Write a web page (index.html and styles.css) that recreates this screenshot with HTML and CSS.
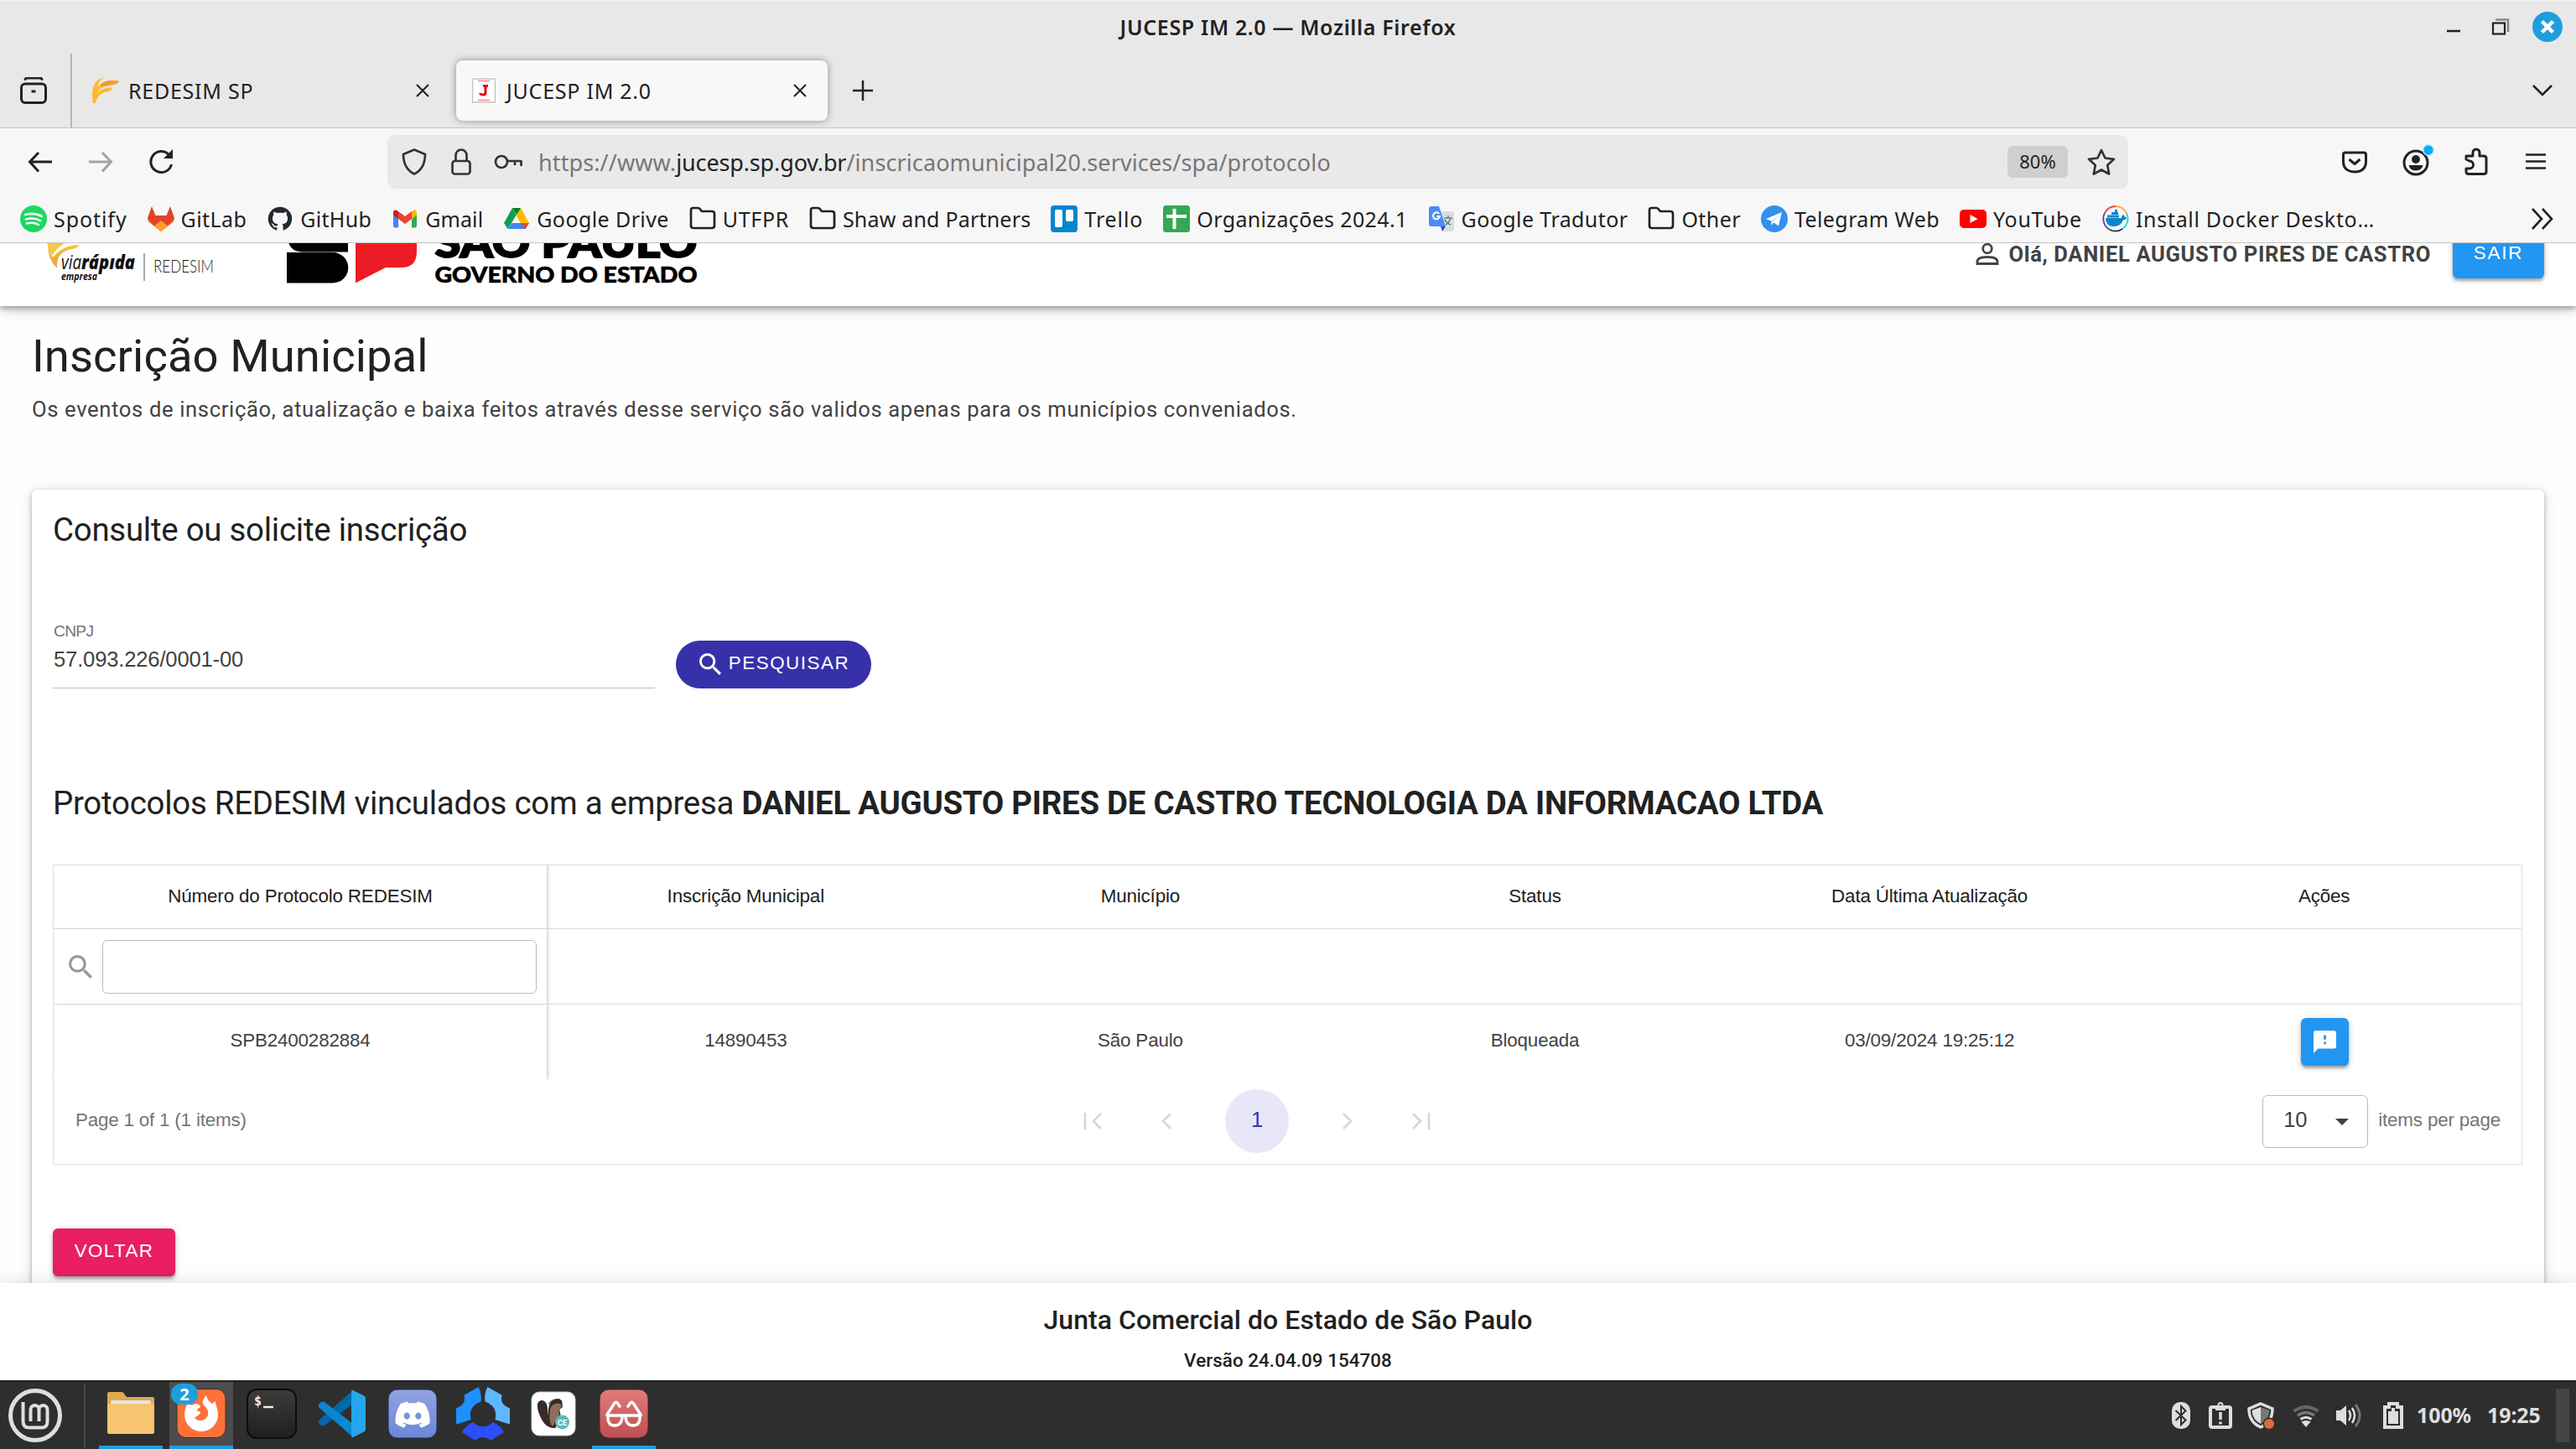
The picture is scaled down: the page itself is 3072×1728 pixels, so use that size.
FILE: index.html
```html
<!DOCTYPE html>
<html lang="pt-BR">
<head>
<meta charset="utf-8">
<title>JUCESP IM 2.0</title>
<link rel="stylesheet" href="styles.css">
</head>
<body>
<header class="titlebar">
  <span class="window-title">JUCESP IM 2.0 — Mozilla Firefox</span>
  <svg class="window-buttons" width="130" height="64" viewBox="2910 0 130 64" fill="none">
    <path d="M2918 37h16" stroke="#222" stroke-width="2.600"/>
    <path d="M2976 23.500h15V38" stroke="#888" stroke-width="2.600"/>
    <rect x="2973" y="27.500" width="14" height="13" stroke="#222" stroke-width="2.200"/>
  </svg>
  <svg class="window-close" width="36" height="36" viewBox="0 0 36 36"><circle cx="18" cy="18" r="18" fill="#1f9ede"/><path d="M11.500 11.500l13 13m0-13l-13 13" stroke="#fff" stroke-width="4.500"/></svg>
</header>

<div class="tabstrip">
  <div class="firefox-view">
    <svg width="32" height="32" viewBox="0 0 32 32" fill="none" stroke="#222" stroke-width="3" stroke-linecap="round"><path d="M6 2.500q1-1.500 2.500-1.500h15q1.500 0 2.500 1.500"/><rect x="1.500" y="8" width="29" height="22.500" rx="4.500"/><path d="M13.500 17h5" stroke-linecap="butt"/></svg>
  </div>
  <div class="tab">
    <svg width="32" height="32" viewBox="0 0 32 32"><path d="M1 31C-2 14 2 2 15 0 9 3 7 7 7 12 12 4 20 3 32 5c-2 4-6 4-12 5C12 11 8 14 6 19c6-6 12-7 18-6-2 4-5 4-9 5-6 2-9 5-11 13z" fill="#fdb92e"/><path d="M9 10C14 4 22 3 32 5c-3 4-8 3-14 5-4 1-7 2-9 0z" fill="#f49a35"/></svg>
    <span class="tab-label">REDESIM SP</span>
    <svg class="tab-close" width="16" height="16" viewBox="0 0 16 16"><path d="M1 1l14 14M15 1L1 15" stroke="#222" stroke-width="2"/></svg>
  </div>
  <div class="tab tab-active">
    <svg width="32" height="32" viewBox="0 0 32 32"><path fill="#fff" d="M0 0h32v32H0z"/><rect x="2.500" y="2" width="27" height="28" fill="#fff" stroke="#c5c5b8" stroke-width="1.500"/><path d="M9 4.500h14M9 27.500h14" stroke="#f88" stroke-width="1.600"/><path d="M15 10.500h6m-3 0v8q0 2.500-3 2.500t-3.500-2" fill="none" stroke="#e30613" stroke-width="3"/></svg>
    <span class="tab-label">JUCESP IM 2.0</span>
    <svg class="tab-close" width="16" height="16" viewBox="0 0 16 16"><path d="M1 1l14 14M15 1L1 15" stroke="#222" stroke-width="2"/></svg>
  </div>
  <svg class="new-tab" width="24" height="24" viewBox="0 0 24 24"><path d="M12 0v24M0 12h24" stroke="#222" stroke-width="2.500"/></svg>
  <svg class="all-tabs" width="26" height="16" viewBox="0 0 26 16" fill="none"><path d="M2 2l11 11L24 2" stroke="#222" stroke-width="2.600"/></svg>
</div>

<div class="toolbar">
  <svg width="232" height="80" viewBox="0 153 232 80" fill="none" stroke="#222" stroke-width="3">
    <path d="M62 193H36M46 182L35.500 193 46 204.500"/>
    <path d="M106 193h26M122 182l10.500 11-10.500 11.500" stroke="#a3a3a3"/>
    <path d="M204.500 196a12.500 12.500 0 1 1-3.500-12"/><path d="M206 178v11h-11z" fill="#222" stroke="none"/>
  </svg>
  <div class="urlbar">
    <svg width="150" height="64" viewBox="489 161 150 64" fill="none" stroke="#333" stroke-width="2.700" stroke-linejoin="round">
      <path d="M494 178.500L507 184q0 17-13 23.500Q481 201 481 184z"/>
      <rect x="539.500" y="192" width="21" height="15.500" rx="3"/><path d="M543.500 192v-7a6.500 6.500 0 0 1 13 0v7"/>
      <circle cx="598" cy="193" r="7"/><path d="M605 192h16.500v6M614 192v5"/>
    </svg>
    <span class="url">https://www.<b>jucesp.sp.gov.br</b>/inscricaomunicipal20.services/spa/protocolo</span>
    <span class="zoom">80%</span>
    <svg width="34" height="32" viewBox="0 0 34 32"><path d="M17 2l4.500 9.500 10.500 1.300-7.800 7.200 2 10.500-9.200-5-9.200 5 2-10.500L2 12.800l10.500-1.300z" fill="none" stroke="#333" stroke-width="2.700" stroke-linejoin="round"/></svg>
  </div>
  <svg class="toolbar-actions" width="260" height="80" viewBox="2780 153 260 80" fill="none" stroke="#222" stroke-width="3" stroke-linejoin="round">
    <path d="M2797 182h22q2.500 0 2.500 2.500v8q0 12-13.500 12.500-13.500-.5-13.500-12.500v-8q0-2.500 2.500-2.500z"/><path d="M2801.500 190l6.500 5.500 6.500-5.500"/>
    <circle cx="2881" cy="194" r="14"/><g fill="#222" stroke="none"><circle cx="2881" cy="190" r="5"/><path d="M2872.500 197h17q-1.500 6.500-8.500 6.500t-8.500-6.500z"/></g>
    <circle cx="2896" cy="179" r="7" fill="#b4e5fa" stroke="none"/><circle cx="2896" cy="179" r="5.500" fill="#00aef5" stroke="none"/>
    <path d="M2941 190v-4h8v-4a4 4 0 0 1 8 0v4h5q3 0 3 3v16q0 2.500-3 2.500h-18q-3 0-3-2.500v-4h4a4.500 4.500 0 0 0 0-9z"/>
    <path d="M3012 184.500h24M3012 192.500h24M3012 200.500h24" stroke-width="2.600"/>
  </svg>
</div>

<nav class="bookmarks">
  <a><svg viewBox="0 0 32 32"><circle cx="16" cy="16" r="16" fill="#1ed760"/><path d="M6 11q11-3 20 2M7 16.500q9.500-2.500 17 1.700M8 21.500q8-2 14 1.500" fill="none" stroke="#f7f7f7" stroke-width="2.600" stroke-linecap="round"/></svg>Spotify</a>
  <a><svg viewBox="0 0 32 32"><path d="M16 31L1 19 0 15 5 1l4.500 11h13L27 1l5 14-1 4z" fill="#e24329"/><path d="M16 31L1 19 0 15l8 9.500z" fill="#fc6d26"/><path d="M16 31l15-12 1-4-8 9.500z" fill="#fc6d26"/><path d="M16 31l-8-6.500L16 18l8 6.500z" fill="#fca326"/></svg>GitLab</a>
  <a><svg viewBox="-1 -1 18 18"><path fill="#24292f" d="M8 0C3.580 0 0 3.580 0 8c0 3.540 2.290 6.530 5.470 7.590.4.070.55-.17.55-.38 0-.19-.01-.82-.01-1.490-2.010.37-2.530-.49-2.690-.94-.09-.23-.48-.94-.82-1.130-.28-.15-.68-.52-.01-.53.63-.01 1.080.58 1.230.82.72 1.210 1.870.87 2.330.66.07-.52.28-.87.51-1.070-1.780-.2-3.640-.89-3.640-3.950 0-.87.31-1.590.82-2.150-.08-.2-.36-1.020.08-2.120 0 0 .67-.21 2.200.82.64-.18 1.320-.27 2-.27s1.360.09 2 .27c1.530-1.040 2.200-.82 2.200-.82.44 1.100.16 1.920.08 2.120.51.56.82 1.270.82 2.150 0 3.070-1.870 3.750-3.650 3.950.29.25.54.73.54 1.480 0 1.070-.01 1.930-.01 2.200 0 .21.15.46.55.38A8.010 8.010 0 0 0 16 8c0-4.420-3.580-8-8-8z"/></svg>GitHub</a>
  <a><svg viewBox="0 0 32 32"><path d="M2 9v15q0 2.500 2.500 2.500H8V13z" fill="#4285f4"/><path d="M24 13v13.500h3.500q2.500 0 2.500-2.500V9z" fill="#34a853"/><path d="M24 7v9l6-4.500V8.500C30 5 27 4.500 24 7z" fill="#fbbc04"/><path d="M8 16V7l8 6 8-6v9l-8 6z" fill="#ea4335"/><path d="M2 8.500v3L8 16V7C5 4.500 2 5 2 8.500z" fill="#c5221f"/></svg>Gmail</a>
  <a><svg viewBox="0 0 32 32"><path d="M11 3L1 21l4.500 7L16 11z" fill="#0f9d58"/><path d="M11 3h10l10 18H20.500z" fill="#ffba00"/><path d="M10 21h21l-4.500 7H5.500z" fill="#4285f4"/><path d="M11 3h10l-5 8z" fill="#00832d"/><path d="M22 21h9l-4.500 7z" fill="#ea4335"/></svg>Google Drive</a>
  <a><svg viewBox="0 0 32 32"><path d="M2 5.500Q2 3 4.500 3H10q2 0 3 1.500L15 7h12q3 0 3 3v14q0 3-3 3H5q-3 0-3-3z" fill="none" stroke="#222" stroke-width="2.700"/></svg>UTFPR</a>
  <a><svg viewBox="0 0 32 32"><path d="M2 5.500Q2 3 4.500 3H10q2 0 3 1.500L15 7h12q3 0 3 3v14q0 3-3 3H5q-3 0-3-3z" fill="none" stroke="#222" stroke-width="2.700"/></svg>Shaw and Partners</a>
  <a><svg viewBox="0 0 32 32"><rect width="32" height="32" rx="4" fill="#0385d1"/><rect x="5" y="5" width="9" height="21" rx="2" fill="#fff"/><rect x="18" y="5" width="9" height="14" rx="2" fill="#fff"/></svg>Trello</a>
  <a><svg viewBox="0 0 32 32"><rect width="32" height="32" rx="3.500" fill="#34a853"/><path d="M13.500 4v24M4 13h24" stroke="#fff" stroke-width="4"/></svg>Organizações 2024.1</a>
  <a><svg viewBox="0 0 32 32"><path d="M14 7h14q3 0 3 2.500V28q0 3-3 3H17z" fill="#dcdcdc"/><path d="M17 31l-2-6h6z" fill="#3a4fc4"/><path d="M1 4q0-3 3-3h9l8 24H4q-3 0-3-3z" fill="#4c8bf5"/><path d="M13.300 10a4 4 0 1 0 .7 3h-4" fill="none" stroke="#fff" stroke-width="2"/><path d="M19 15h10M24 12v3m3 0q-2 6-6 8m-1-6q3 5 7 6" fill="none" stroke="#607d8b" stroke-width="1.500"/></svg>Google Tradutor</a>
  <a><svg viewBox="0 0 32 32"><path d="M2 5.500Q2 3 4.500 3H10q2 0 3 1.500L15 7h12q3 0 3 3v14q0 3-3 3H5q-3 0-3-3z" fill="none" stroke="#222" stroke-width="2.700"/></svg>Other</a>
  <a><svg viewBox="0 0 32 32"><circle cx="16" cy="16" r="16" fill="#3390ec"/><path d="M6 16l19-8-4 16.500-5.500-4-3 3-.5-5z" fill="#fff"/><path d="M12 18.500L21 12l-7 8-1.500 3.500z" fill="#bcdcf8"/></svg>Telegram Web</a>
  <a><svg viewBox="0 0 32 32"><rect y="5" width="32" height="22" rx="5" fill="#f00"/><path d="M12.500 11v10l9-5z" fill="#fff"/></svg>YouTube</a>
  <a><svg viewBox="0 0 32 32" fill="none"><path d="M16 1a15 15 0 0 1 13 8" stroke="#fbb040" stroke-width="1.800"/><path d="M29 9a15 15 0 0 1-5 19" stroke="#27d3d8" stroke-width="1.800"/><path d="M24 28a15 15 0 0 1-15 1" stroke="#12344d" stroke-width="1.800"/><path d="M9 29A15 15 0 0 1 3 9" stroke="#5b3f97" stroke-width="1.800"/><path d="M3 9a15 15 0 0 1 13-8" stroke="#ef4056" stroke-width="1.800"/><path d="M4 15h19q0-3 2-4 2 1 2 3h2q0 3-4 3.500Q22 25 14 25 4 25 4 15z" fill="#0a87c9"/><path d="M6 11.500h14v3H6zM11 8h8v3h-8zM15 5h3v3h-3z" fill="#0a87c9"/></svg>Install Docker Deskto…</a>
  <svg class="overflow" viewBox="0 0 28 26"><path d="M2 1l11 12L2 25M14 1l11 12-11 12" fill="none" stroke="#222" stroke-width="2.600"/></svg>
</nav>

<div class="page">
  <div class="app-header">
    <div class="app-header-inner">
      <svg class="logos" width="860" height="124" viewBox="0 241 860 124">
        <defs><linearGradient id="flame" x2="0" y2="1"><stop offset="0" stop-color="#f5c838"/><stop offset="1" stop-color="#e8a03c"/></linearGradient></defs>
        <path d="M55 286H84Q68 294 62 305 58 299 57 293z" fill="#f4c945"/>
        <path d="M57 289Q56 308 68 320 67 308 74 302q5-4 12-5 6-1 9-5-20 0-32 15-6-8-6-18z" fill="url(#flame)"/>
        <g font-family="Open Sans, sans-serif" font-style="italic" fill="#111">
          <text x="73" y="321" font-size="23" textLength="24" lengthAdjust="spacingAndGlyphs">via</text>
          <text x="97" y="321" font-size="23" font-weight="800" textLength="64" lengthAdjust="spacingAndGlyphs">rápıda</text>
          <text x="73" y="334" font-size="13" font-weight="700" textLength="43" lengthAdjust="spacingAndGlyphs">empresa</text>
        </g>
        <path d="M172 302v33" stroke="#555"/>
        <text x="183" y="324.500" font-family="Lato, sans-serif" font-weight="300" font-size="21.500" fill="#222" textLength="72" lengthAdjust="spacingAndGlyphs">REDESIM</text>
        <path d="M342 280h73v20.500h-55q-16 0-18-20zM342 301h55a18 18 0 0 1 0 36.500h-55z"/>
        <path d="M424 280h73v20q0 19-18 19h-19l-36 18.500z" fill="#ed1c24"/>
        <g font-family="Lato, sans-serif" font-weight="900" fill="#000">
          <text x="518.500" y="306.500" font-size="50" textLength="313" lengthAdjust="spacingAndGlyphs" stroke="#000" stroke-width="2">SÃO PAULO</text>
          <text x="518.500" y="337" font-size="26.500" textLength="313" lengthAdjust="spacingAndGlyphs" stroke="#000" stroke-width=".6">GOVERNO DO ESTADO</text>
        </g>
      </svg>
      <div class="user">
        <svg width="28" height="28" viewBox="0 0 28 28" fill="none" stroke="#444" stroke-width="2.800"><circle cx="14" cy="7.500" r="5.300"/><path d="M2 25.500v-2.500q0-5.500 12-5.500t12 5.500v2.500z"/></svg>
        <span>Olá, DANIEL AUGUSTO PIRES DE CASTRO</span>
      </div>
      <button class="btn btn-blue btn-sair">SAIR</button>
    </div>
  </div>

  <main>
    <h1>Inscrição Municipal</h1>
    <p class="subtitle">Os eventos de inscrição, atualização e baixa feitos através desse serviço são validos apenas para os municípios conveniados.</p>

    <section class="card">
      <h2>Consulte ou solicite inscrição</h2>
      <div class="search-row">
        <div class="field">
          <label>CNPJ</label>
          <span>57.093.226/0001-00</span>
        </div>
        <button class="btn btn-search"><svg width="26" height="26" viewBox="3 3 17.500 17.500"><path fill="#fff" d="M15.500 14h-.79l-.28-.27A6.470 6.470 0 0 0 16 9.500 6.500 6.500 0 1 0 9.500 16c1.610 0 3.090-.59 4.230-1.570l.27.28v.79l5 4.990L20.490 19l-4.990-5zm-6 0C7.010 14 5 11.990 5 9.500S7.010 5 9.500 5 14 7.010 14 9.500 11.990 14 9.500 14z"/></svg>PESQUISAR</button>
      </div>
      <h2 class="company">Protocolos REDESIM vinculados com a empresa <b>DANIEL AUGUSTO PIRES DE CASTRO TECNOLOGIA DA INFORMACAO LTDA</b></h2>

      <div class="grid">
        <div class="grid-row grid-head">
          <div>Número do Protocolo REDESIM</div><div>Inscrição Municipal</div><div>Município</div><div>Status</div><div>Data Última Atualização</div><div>Ações</div>
        </div>
        <div class="grid-row grid-filter">
          <div><svg width="28" height="28" viewBox="3 3 17.500 17.500"><path fill="#979797" d="M15.500 14h-.79l-.28-.27A6.470 6.470 0 0 0 16 9.500 6.500 6.500 0 1 0 9.500 16c1.610 0 3.090-.59 4.230-1.570l.27.28v.79l5 4.990L20.490 19l-4.990-5zm-6 0C7.010 14 5 11.990 5 9.500S7.010 5 9.500 5 14 7.010 14 9.500 11.990 14 9.500 14z"/></svg><span class="filter-input"></span></div><div></div><div></div><div></div><div></div><div></div>
        </div>
        <div class="grid-row grid-data">
          <div>SPB2400282884</div><div>14890453</div><div>São Paulo</div><div>Bloqueada</div><div>03/09/2024 19:25:12</div>
          <div class="actions"><button class="btn btn-blue btn-icon"><svg width="27" height="27" viewBox="2 2 20 20"><path fill="#fff" d="M20 2H4c-1.100 0-2 .9-2 2v18l4-4h14c1.100 0 2-.9 2-2V4c0-1.100-.9-2-2-2zm-7 12h-2v-2h2v2zm0-4h-2V6h2v4z"/></svg></button></div>
        </div>
        <div class="pager">
          <span class="pager-info">Page 1 of 1 (1 items)</span>
          <div class="pager-nav">
            <svg width="24" height="20" viewBox="0 0 24 20"><path d="M2 0v20M21 1l-9 9 9 9"/></svg>
            <svg width="14" height="20" viewBox="0 0 14 20"><path d="M12 1l-9 9 9 9"/></svg>
            <span class="pager-current">1</span>
            <svg width="14" height="20" viewBox="0 0 14 20"><path d="M2 1l9 9-9 9"/></svg>
            <svg width="24" height="20" viewBox="0 0 24 20"><path d="M22 0v20M3 1l9 9-9 9"/></svg>
          </div>
          <div class="pager-size">
            <span class="select">10<i></i></span>
            <span>items per page</span>
          </div>
        </div>
      </div>
      <button class="btn btn-pink">VOLTAR</button>
    </section>
  </main>

  <footer>
    <strong>Junta Comercial do Estado de São Paulo</strong>
    <small>Versão 24.04.09 154708</small>
  </footer>
</div>

<div class="taskbar">
  <div class="start">
    <svg width="68" height="68" viewBox="8 1654 68 68" fill="none" stroke="#dedede"><circle cx="42" cy="1688" r="29.500" stroke-width="5"/><path d="M27.500 1672v23q0 7.500 7 7.500h15q7 0 7-7V1681a5 5 0 0 0-10 0v14M46.500 1681a5 5 0 0 0-10 0v14" stroke-width="4"/></svg>
  </div>
  <div class="tasks">
    <div class="task open"><svg viewBox="0 0 64 64"><path d="M4 8q0-2 2-2h15q2 0 3 2l3 4h31q2 0 2 2v10H4z" fill="#dfa94f"/><path d="M8 18q0-2 2-2h44q2 0 2 2v6H8z" fill="#e4e4e4"/><rect x="4" y="20" width="56" height="36" rx="2" fill="#f8c570"/></svg></div>
    <div class="task open active"><svg viewBox="0 0 64 64"><rect x="3" y="2.500" width="58" height="58" rx="11" fill="#ff7139" stroke="#333"/><path d="M38 10c1 6 4 7 7 10l4-3c0 5 3 9 3 16a20 20 0 0 1-40 0c0-7 3-13 6-15l1 4 7-2c3 0 3 2 5 3 0 2-4 2-4 5-4 0-6 3-4 7 2 5 9 7 14 3 5-4 4-12-1-15-4-4-2-9 2-13z" fill="#fff"/><path d="M22 29q6-2 9 1 0 3-5 5-2 4-4-1z" fill="#fff"/></svg><span class="badge">2</span></div>
    <div class="task"><svg viewBox="0 0 64 64"><defs><linearGradient id="tm" x2="0" y2="1"><stop offset="0" stop-color="#3c3c3c"/><stop offset="1" stop-color="#1f1f1f"/></linearGradient></defs><rect x="3" y="3" width="58" height="58" rx="11" fill="url(#tm)" stroke="#0c0c0c" stroke-width="2"/><text x="11" y="22" font-family="DejaVu Sans Mono, monospace" font-weight="700" font-size="15" fill="#eee">$</text><path d="M22 24h12" stroke="#eee" stroke-width="2.500"/></svg></div>
    <div class="task"><svg viewBox="0 0 64 64"><path d="M45 4v16L11 46q-2 1-4 0l-3-3q-1-2 0-3z" fill="#0069ac"/><path d="M45 60V44L11 18q-2-1-4 0l-3 3q-1 2 0 3z" fill="#0b87cf"/><path d="M45 4l13 6.500q2 1 2 3v37q0 2-2 3L45 60q-2 1-2-3V7q0-4 2-3z" fill="#26a6ee"/></svg></div>
    <div class="task"><svg viewBox="0 0 64 64"><defs><linearGradient id="dc" x2="0" y2="1"><stop offset="0" stop-color="#93a2e0"/><stop offset="1" stop-color="#6d86d8"/></linearGradient></defs><rect x="3" y="3" width="58" height="58" rx="11" fill="url(#dc)" stroke="#232c50"/><path transform="translate(11.500 12.500) scale(1.710)" fill="#fff" d="M20.317 4.370a19.790 19.790 0 0 0-4.885-1.515.074.074 0 0 0-.079.037c-.211.375-.445.865-.608 1.250-1.845-.276-3.680-.276-5.487 0-.164-.393-.406-.874-.618-1.250a.077.077 0 0 0-.079-.037 19.736 19.736 0 0 0-4.885 1.515.07.07 0 0 0-.032.028C.533 9.046-.319 13.580.099 18.058a.082.082 0 0 0 .031.056c2.053 1.508 4.041 2.423 5.993 3.029a.078.078 0 0 0 .084-.028c.462-.630.873-1.295 1.226-1.994a.076.076 0 0 0-.042-.106c-.653-.248-1.274-.550-1.872-.892a.077.077 0 0 1-.008-.128c.126-.094.252-.192.372-.291a.074.074 0 0 1 .078-.011c3.928 1.793 8.180 1.793 12.061 0a.074.074 0 0 1 .079.010c.120.099.246.198.373.292a.077.077 0 0 1-.007.128 12.299 12.299 0 0 1-1.873.891.077.077 0 0 0-.041.107c.360.698.772 1.363 1.225 1.993a.076.076 0 0 0 .084.029c1.961-.607 3.950-1.522 6.002-3.029a.077.077 0 0 0 .031-.055c.500-5.177-.838-9.674-3.549-13.660a.061.061 0 0 0-.031-.029zM8.020 15.331c-1.183 0-2.157-1.086-2.157-2.419s.956-2.419 2.157-2.419c1.211 0 2.176 1.095 2.157 2.419 0 1.333-.956 2.419-2.157 2.419zm7.975 0c-1.183 0-2.157-1.086-2.157-2.419s.955-2.419 2.157-2.419c1.211 0 2.176 1.095 2.157 2.419 0 1.333-.946 2.419-2.157 2.419z"/></svg></div>
    <div class="task"><svg viewBox="0 0 64 64"><path d="M26.500 0L10 9.500q-1 1 0 3 1 9-10 13V43q0 1.500 2 1L17.500 39Q14 23 29.500 17.500 31 8 26.500 0z" fill="#1e90ff"/><path transform="matrix(-1 0 0 1 64 0)" d="M26.500 0L10 9.500q-1 1 0 3 1 9-10 13V43q0 1.500 2 1L17.500 39Q14 23 29.500 17.500 31 8 26.500 0z" fill="#5db8ff"/><path d="M20 42Q10 47 7 54l16 10q3-4 9-4t9 4l16-10Q54 47 44 42q-5 5-12 5t-12-5z" fill="#2b4eff"/></svg></div>
    <div class="task"><svg viewBox="0 0 64 64"><rect x="6" y="6" width="52" height="52" rx="9" fill="#fff" stroke="#ccc"/><path d="M14 18c5-5 11 0 11 8 0 6 1 9 3 12l7 11c-12 1-17-9-20-17-2-5-3-11-1-14z" fill="#3a2a26"/><path d="M27 22c1-6 9-9 15-6l1 8-4 3c3 8 1 17-6 22-7-3-9-17-6-27z" fill="#3a2a26"/><path d="M28 28c1-7 6-9 12-8l2 3-4 5c2 5 1 9-3 11-1 4-3 6-4 8-4-4-4-13-3-19z" fill="#8f6f5a"/><path d="M26 20q6-7 14-5" fill="none" stroke="#222" stroke-width="1"/><circle cx="42.500" cy="42" r="8.500" fill="#56b9bd"/><text x="42.500" y="45.500" text-anchor="middle" font-family="Roboto, sans-serif" font-size="9.500" font-weight="700" fill="#fff">CE</text></svg></div>
    <div class="task open"><svg viewBox="0 0 64 64"><defs><linearGradient id="gl" x2="0" y2="1"><stop offset="0" stop-color="#e57b7b"/><stop offset="1" stop-color="#bd4f4f"/></linearGradient></defs><rect x="3" y="3" width="58" height="58" rx="11" fill="url(#gl)" stroke="#4a2222"/><g fill="none" stroke="#fff" stroke-width="3.400" stroke-linecap="round" stroke-linejoin="round"><path d="M12 34h40M13 34q-1 12 8 12t9-12M34 34q0 12 9 12t8-12M12 33l9-14q2-1.500 3.500.5L27 23M52 33l-9-14q-2-1.500-3.500.5L37 23"/></g></svg></div>
  </div>
  <div class="tray">
    <svg width="48" height="48" viewBox="2577 1664 48 48"><rect x="2590" y="1672" width="22" height="32" rx="10" fill="#dedede"/><path d="M2594.500 1682l12 11.500-5.500 5.500v-22l5.500 5.500-12 11.500" fill="none" stroke="#2e2e2e" stroke-width="2"/></svg>
    <svg width="47" height="48" viewBox="2625 1664 47 48" fill="none" stroke="#dedede"><rect x="2636" y="1678" width="24" height="24" rx="2" stroke-width="4"/><path d="M2642 1679h12" stroke-width="6"/><circle cx="2648" cy="1675.500" r="2.500" stroke-width="2"/><path d="M2648 1684v9m0 2.500v3" stroke-width="3.500"/></svg>
    <svg width="51" height="48" viewBox="2672 1664 51 48"><path d="M2696 1674l14 6q0 16-14 22-14-6-14-22z" fill="none" stroke="#dedede" stroke-width="3.500"/><path d="M2696 1678v20q-10-5-10.500-16z" fill="#dedede"/><path d="M2696 1678v20q10-5 10.500-16z" fill="#777"/><circle cx="2706" cy="1698" r="7.500" fill="#2e2e2e"/><circle cx="2706" cy="1698" r="6" fill="#db6b38"/></svg>
    <svg width="53" height="48" viewBox="2723 1664 53 48" fill="none"><path d="M2735.500 1683q14.500-10 29 0" stroke="#666" stroke-width="4"/><path d="M2740 1688q10-7 20 0" stroke="#777" stroke-width="3.500"/><path d="M2743.500 1692.500q6.500-4.500 13 0" stroke="#dedede" stroke-width="3"/><path d="M2744.500 1695.500q5.500-3 11 0l-5.500 6.500z" fill="#dedede"/></svg>
    <svg width="52" height="48" viewBox="2776 1664 52 48" fill="none"><path d="M2786 1682h5l7-6v24l-7-6h-5z" fill="#dedede"/><path d="M2801 1682q4 6 0 12" stroke="#dedede" stroke-width="2.500"/><path d="M2805 1679q6 9 0 18" stroke="#dedede" stroke-width="2.500"/><path d="M2809 1675q10 13 0 26" stroke="#777" stroke-width="3"/></svg>
    <svg width="54" height="48" viewBox="2828 1664 54 48" fill="none"><path d="M2844 1678h5v-4h10v4h5v24h-20z" stroke="#dedede" stroke-width="4"/><path d="M2848 1683h4v-4h4v4h4v15h-12z" fill="#dedede"/></svg>
    <span class="battery">100%</span>
    <span class="clock">19:25</span>
    <i class="show-desktop"></i>
  </div>
</div>
</body>
</html>
```
FILE: styles.css
```css
* { box-sizing: border-box; }
body {
  margin: 0;
  width: 3072px;
  height: 1728px;
  overflow: hidden;
  display: flex;
  flex-direction: column;
  font-family: "Noto Sans", "Open Sans", sans-serif;
  color: #222;
  background: #fff;
}
svg { display: block; flex: none; }
button { border: 0; font: inherit; }
h1, h2, p { margin: 0; font-weight: 400; }

/* Browser chrome */
.titlebar {
  position: relative;
  flex: none;
  height: 64px;
  display: flex;
  align-items: center;
  justify-content: center;
  background: #e8e8e8;
  border-top: 2px solid #efefef;
}
.window-title { font-size: 25px; font-weight: 600; letter-spacing: .64px; padding-bottom: 2px; white-space: nowrap; }
.window-buttons { position: absolute; right: 32px; top: -2px; }
.window-close { position: absolute; right: 16px; top: 12px; }

.tabstrip {
  flex: none;
  height: 89px;
  display: flex;
  align-items: center;
  background: #e8e8e8;
  border-bottom: 1px solid #c3c3c3;
}
.firefox-view {
  align-self: stretch;
  width: 86px;
  display: flex;
  align-items: center;
  padding-left: 24px;
  border-right: 2px solid #b5b5b5;
}
.tab {
  display: flex;
  align-items: center;
  gap: 11px;
  height: 72px;
  width: 442px;
  padding: 0 16px 0 24px;
  margin-right: 16px;
  font-size: 25px;
}
.tab-label { flex: 1; letter-spacing: .75px; white-space: nowrap; }
.tab-active {
  width: 443px;
  padding: 0 25px 0 17px;
  background: #f8f8f8;
  border-radius: 8px;
  box-shadow: 0 0 8px rgba(0, 0, 0, .4);
}
.new-tab { margin-left: 14px; }
.all-tabs { margin: 0 27px 0 auto; }

.toolbar {
  flex: none;
  height: 80px;
  display: flex;
  align-items: center;
  background: #f7f7f7;
}
.urlbar {
  margin-left: 230px;
  width: 2076px;
  height: 64px;
  display: flex;
  align-items: center;
  padding: 0 15px 0 27px;
  background: #e9e9e9;
  border-radius: 9px;
}
.urlbar > svg:first-child { overflow: visible; }
.url { flex: 1; padding-left: 3px; font-size: 27px; color: #777; letter-spacing: .11px; white-space: nowrap; }
.url b { font-weight: 400; color: #222; letter-spacing: -.14px; }
.zoom {
  width: 72px;
  height: 38px;
  margin-right: 23px;
  border-radius: 6px;
  background: #cfcfcf;
  text-align: center;
  font-size: 22px;
  line-height: 37px;
}
.toolbar-actions { margin-left: auto; margin-right: 32px; }

.bookmarks {
  flex: none;
  height: 57px;
  padding-left: 24px;
  display: flex;
  align-items: center;
  gap: 24px;
  background: #f7f7f7;
  border-bottom: 1px solid #c3c3c3;
  font-size: 25px;
  letter-spacing: .41px;
  white-space: nowrap;
}
.bookmarks a { display: flex; align-items: center; gap: 8px; }
.bookmarks a svg { width: 32px; height: 32px; }
.bookmarks a:nth-child(1) { letter-spacing: .93px; }
.bookmarks a:nth-child(3) { letter-spacing: .33px; }
.bookmarks a:nth-child(4) { letter-spacing: .1px; }
.bookmarks a:nth-child(6) { letter-spacing: .64px; }
.bookmarks a:nth-child(7) { letter-spacing: .2px; }
.bookmarks a:nth-child(8) { letter-spacing: .9px; }
.bookmarks a:nth-child(9) { letter-spacing: .35px; }
.bookmarks a:nth-child(13), .bookmarks a:nth-child(14) { letter-spacing: .7px; }
.overflow { width: 28px; height: 26px; margin: 0 26px 0 auto; }

/* Web page */
.page { flex: 1; min-height: 0; display: flex; flex-direction: column; background: #fefefe; }
.app-header {
  flex: none;
  height: 75px;
  background: #fff;
  box-shadow: 0 3px 6px rgba(0, 0, 0, .28), 0 4px 16px rgba(0, 0, 0, .2);
  clip-path: inset(0 0 -40px 0);
  z-index: 1;
}
/* The header is scrolled partly out of view */
.app-header-inner { height: 124px; margin-top: -49px; display: flex; align-items: center; padding-right: 38px; }
.user {
  margin-left: auto;
  display: flex;
  align-items: center;
  gap: 11px;
  font: 700 25.6px Roboto, sans-serif;
  letter-spacing: .62px;
  color: #424242;
}
.btn {
  flex: none;
  display: flex;
  align-items: center;
  justify-content: center;
  height: 57px;
  padding: 0 0 4px;
  border-radius: 6px;
  color: #fff;
  font-family: "Liberation Sans", Arial, sans-serif;
  font-size: 22.4px;
  letter-spacing: 1.55px;
  box-shadow: 0 3px 3px rgba(0, 0, 0, .25), 0 2px 8px rgba(0, 0, 0, .18);
}
.btn-blue { background: #2196f3; }
.btn-sair { width: 109px; height: 58px; margin-left: 26px; padding-bottom: 2px; letter-spacing: 1.8px; }

main { flex: 1; min-height: 0; overflow: hidden; padding: 28px 38px 0; font-family: Roboto, sans-serif; }
h1 { font-size: 54.4px; line-height: 64px; letter-spacing: .06px; color: #212121; }
.subtitle { margin-top: 11px; font-size: 25.6px; line-height: 40px; letter-spacing: .645px; color: #424242; }
.card {
  height: 1000px;
  margin-top: 76px;
  padding: 22px 26px 0 25px;
  border-radius: 6px;
  background: #fff;
  box-shadow: 0 2px 5px rgba(0, 0, 0, .28), 0 2px 16px rgba(0, 0, 0, .14);
}
h2 { font-size: 38.4px; line-height: 52px; letter-spacing: -.24px; color: #212121; white-space: nowrap; }
.search-row { display: flex; align-items: flex-end; gap: 25px; height: 81px; margin-top: 82px; }
.field {
  width: 718px;
  height: 81px;
  display: flex;
  flex-direction: column;
  gap: 4px;
  border-bottom: 1.5px solid #bdbdbd;
  font-family: "Liberation Sans", Arial, sans-serif;
}
.field label { font-size: 19.2px; line-height: 26px; letter-spacing: -.7px; color: #757575; padding-left: 1px; }
.field span { font-size: 25.6px; line-height: 32px; letter-spacing: -.17px; color: #424242; padding-left: 1px; }
.btn-search { width: 233px; padding-left: 2px; border-radius: 29px; gap: 9px; background: #3631a9; box-shadow: none; }
.btn-search svg { margin-top: 2px; }
.company { margin-top: 111px; }
.company b { font-weight: 700; letter-spacing: -.26px; }

.grid {
  margin-top: 47px;
  height: 358px;
  border: 1px solid #e0e0e0;
  font-family: "Liberation Sans", Arial, sans-serif;
  font-size: 22.4px;
  letter-spacing: -.16px;
  color: #424242;
}
.grid-row { display: grid; grid-template-columns: 590px repeat(5, 1fr); }
.grid-row > div { display: flex; align-items: center; justify-content: center; padding-bottom: 4px; }
.grid-row > div:first-child { border-right: 2px solid #e0e0e0; box-shadow: 2px 0 3px rgba(0, 0, 0, .05); }
.grid-head { height: 76px; border-bottom: 1px solid #dcdcdc; color: #212121; }
.grid-row.grid-head > div { padding-bottom: 2px; }
.grid-filter { height: 90px; border-bottom: 1px solid #dcdcdc; }
.grid-row.grid-filter > div:first-child { justify-content: flex-start; padding: 0 0 0 18px; gap: 12px; }
.filter-input { width: 518px; height: 64px; border: 1.5px solid #bbb; border-radius: 6px; }
.grid-data { height: 89px; }
.grid-row > .actions { padding: 0 0 0 1px; }
.btn-icon { width: 57px; padding: 0; }

.pager {
  height: 100px;
  padding: 0 25px 0 26px;
  display: grid;
  grid-template-columns: 1fr auto 1fr;
  align-items: center;
  color: #757575;
}
.pager-info { padding-bottom: 3px; letter-spacing: -.2px; }
.pager-nav { display: flex; align-items: center; margin-right: 74px; }
.pager-nav svg { fill: none; stroke: #d6d6d6; stroke-width: 2.600; }
.pager-nav svg:first-child { margin-right: 68px; }
.pager-nav svg:last-child { margin-left: 68px; }
.pager-current {
  width: 76px;
  height: 76px;
  margin: 0 63px;
  padding-bottom: 4px;
  display: flex;
  align-items: center;
  justify-content: center;
  border-radius: 50%;
  background: #e8e6f9;
  color: #3631b9;
  font-size: 25.6px;
}
.pager-size { justify-self: end; display: flex; align-items: center; gap: 12px; }
.pager-size > span:last-child { padding-bottom: 3px; }
.select {
  width: 126px;
  height: 63px;
  display: flex;
  align-items: center;
  justify-content: space-between;
  padding: 0 22px 4px 24px;
  border: 1.5px solid #bbb;
  border-radius: 6px;
  color: #424242;
  font-size: 25.6px;
}
.select i { margin-top: 6px; border: 8px solid transparent; border-top-color: #424242; border-bottom: 0; }
.btn-pink { width: 146px; margin-top: 76px; background: #e91e63; letter-spacing: 1.400px; }

footer {
  position: relative;
  z-index: 2;
  flex: none;
  height: 116px;
  padding-top: 24px;
  display: flex;
  flex-direction: column;
  align-items: center;
  gap: 10px;
  background: #fff;
  box-shadow: 0 0 20px rgba(0, 0, 0, .14);
  font-family: Roboto, sans-serif;
  color: #212121;
}
footer strong { font-size: 32px; font-weight: 500; line-height: 40px; letter-spacing: .06px; }
footer small { font-size: 22.4px; font-weight: 500; line-height: 36px; letter-spacing: .06px; }

/* Desktop panel */
.taskbar {
  position: relative;
  z-index: 3;
  flex: none;
  height: 82px;
  display: flex;
  background: #2e2e2e;
  border-top: 2px solid #222;
}
.start { width: 102px; padding: 6px 0 0 8px; background: linear-gradient(#474747, #474747) right 3px / 2px 76px no-repeat; }
.tasks { display: flex; gap: 8px; margin-left: 16px; }
.task { position: relative; width: 76px; height: 80px; padding: 6px; }
.task svg { width: 64px; height: 64px; }
.task.active { background: #4d4d4d; }
.task.open { box-shadow: inset 0 -4px #1f9ede; }
.badge {
  position: absolute;
  left: 2px;
  top: 2px;
  width: 32px;
  height: 25px;
  border-radius: 12px;
  background: #1f9ede;
  color: #fff;
  font-size: 20px;
  font-weight: 700;
  line-height: 25px;
  text-align: center;
}
.tray {
  margin-left: auto;
  display: flex;
  align-items: center;
  padding-right: 8px;
  color: #dedede;
  font-size: 25px;
  font-weight: 700;
}
.battery { width: 84px; letter-spacing: -.1px; padding-bottom: 2px; }
.clock { width: 82px; letter-spacing: -.1px; padding-bottom: 2px; }
.show-desktop { width: 16px; height: 64px; background: #444; }
```
